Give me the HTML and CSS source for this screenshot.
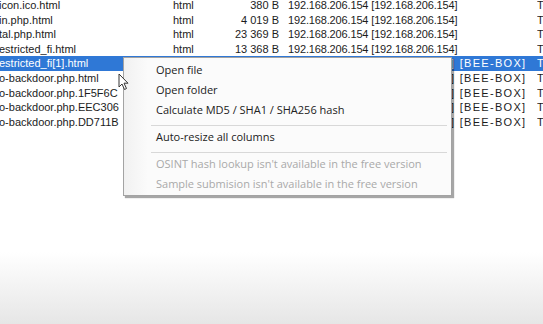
FILE: index.html
```html
<!DOCTYPE html>
<html lang="en">
<head>
    <meta charset="UTF-8">
    <title>Files – context menu</title>
    <link rel="stylesheet" href="styles.css">
</head>
<body>
    <div class="list">
        <div class="row"><span class="name">icon.ico.html</span><span class="type">html</span><span class="size">380 B</span><span class="host">192.168.206.154 [192.168.206.154]</span><span class="proto">TCP</span></div>
        <div class="row"><span class="name">in.php.html</span><span class="type">html</span><span class="size">4 019 B</span><span class="host">192.168.206.154 [192.168.206.154]</span><span class="proto">TCP</span></div>
        <div class="row"><span class="name">tal.php.html</span><span class="type">html</span><span class="size">23 369 B</span><span class="host">192.168.206.154 [192.168.206.154]</span><span class="proto">TCP</span></div>
        <div class="row"><span class="name">estricted_fi.html</span><span class="type">html</span><span class="size">13 368 B</span><span class="host">192.168.206.154 [192.168.206.154]</span><span class="proto">TCP</span></div>
        <div class="row selected"><span class="name">estricted_fi[1].html</span><span class="type"></span><span class="size"></span><span class="host tail">] [BEE-BOX]</span><span class="proto">TCP</span></div>
        <div class="row"><span class="name">o-backdoor.php.html</span><span class="type"></span><span class="size"></span><span class="host tail">] [BEE-BOX]</span><span class="proto">TCP</span></div>
        <div class="row"><span class="name">o-backdoor.php.1F5F6C</span><span class="type"></span><span class="size"></span><span class="host tail">] [BEE-BOX]</span><span class="proto">TCP</span></div>
        <div class="row"><span class="name">o-backdoor.php.EEC306</span><span class="type"></span><span class="size"></span><span class="host tail">] [BEE-BOX]</span><span class="proto">TCP</span></div>
        <div class="row"><span class="name">o-backdoor.php.DD711B</span><span class="type"></span><span class="size"></span><span class="host tail">] [BEE-BOX]</span><span class="proto">TCP</span></div>
    </div>

    <div class="menu">
        <div class="item">Open file</div>
        <div class="item">Open folder</div>
        <div class="item">Calculate MD5 / SHA1 / SHA256 hash</div>
        <div class="sep"></div>
        <div class="item">Auto-resize all columns</div>
        <div class="sep"></div>
        <div class="item disabled">OSINT hash lookup isn't available in the free version</div>
        <div class="item disabled">Sample submision isn't available in the free version</div>
    </div>

    <svg class="cursor" width="12" height="18" viewBox="0 0 12 18">
        <path d="M1 1 L1 14 L4 11 L6.5 16.5 L8.5 15.5 L6 10.2 L10 10.2 Z" fill="#fff" stroke="#333" stroke-width="1" stroke-linejoin="round"/>
    </svg>
</body>
</html>
```

FILE: styles.css
```css
body {
    margin: 0;
    height: 324px;
    overflow: hidden;
    position: relative;
    font-family: 'Liberation Sans', Arial, sans-serif;
    font-size: 11px;
    color: #1c1c1c;
    background: linear-gradient(to bottom, #ffffff 0, #ffffff 252px, #e6e6e6 324px);
}
.list {
    margin-top: -2px;
}
.row {
    display: grid;
    grid-template-columns: 173px 60px 46px 258px 20px;
    height: 14.6px;
    line-height: 14.6px;
    white-space: nowrap;
}
.row span {
    overflow: hidden;
}
.name {
    margin-left: -1px;
}
.size {
    text-align: right;
}
.host {
    padding-left: 9px;
    letter-spacing: -0.15px;
}
.host.tail {
    padding-left: 172px;
    letter-spacing: 1.3px;
}
.selected {
    background: #2f78d6;
    color: #fff;
}
.menu {
    position: absolute;
    left: 123px;
    top: 57px;
    width: 327px;
    padding: 2px 0 1px;
    background: linear-gradient(to right, #f1f1f1 0, #fbfbfb 24px, #fbfbfb 100%);
    border: 1px solid #a3a3a3;
    box-shadow: 2px 2px 1px rgba(0, 0, 0, 0.35);
    font-family: 'Open Sans', 'Noto Sans', sans-serif;
    font-size: 11px;
    color: #222;
}
.item {
    height: 20px;
    line-height: 20px;
    padding-left: 32px;
    white-space: nowrap;
}
.disabled {
    color: #a9a9a9;
}
.sep {
    height: 5px;
    margin: 0 4px 1px 27px;
    border-bottom: 1px solid #d8d8d8;
}
.cursor {
    position: absolute;
    left: 118px;
    top: 73px;
}
```
